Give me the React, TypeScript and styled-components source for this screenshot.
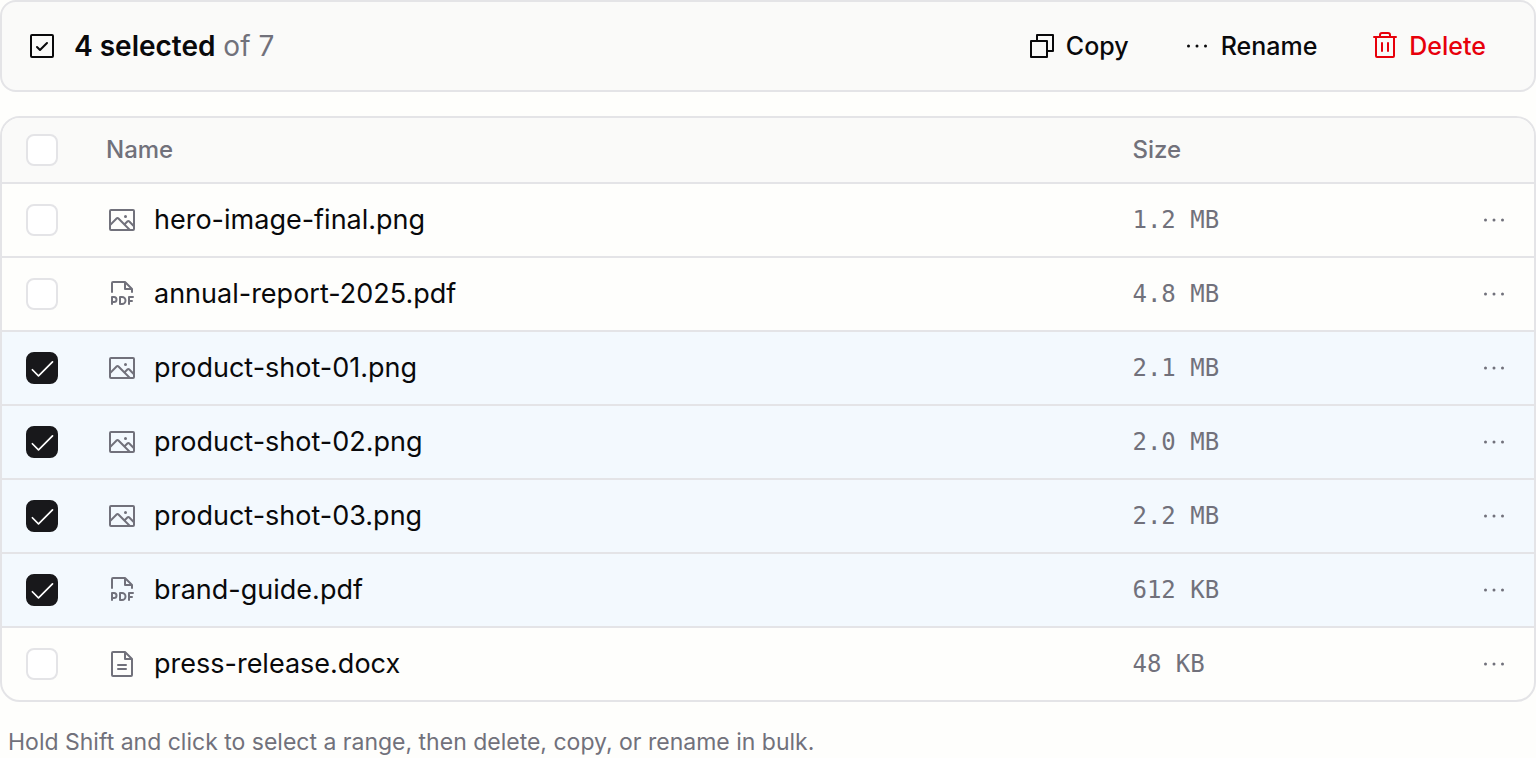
import React, { useRef, useState } from "react";
import styled, { createGlobalStyle } from "styled-components";
import {
  PiCheck,
  PiCheckSquare,
  PiCopy,
  PiDotsThree,
  PiFilePdf,
  PiFileText,
  PiImage,
  PiTrash,
} from "react-icons/pi";

const sans = `Inter, "Liberation Sans", sans-serif`;
const mono = `"DejaVu Sans Mono", "Liberation Mono", monospace`;

const color = {
  page: "#fefefc",
  panel: "#fafaf9",
  border: "#e4e4e7",
  text: "#09090b",
  muted: "#71717b",
  danger: "#e7000b",
  selected: "#f3f9fe",
  checked: "#18181b",
};

const GlobalStyle = createGlobalStyle`
  *, *::before, *::after { box-sizing: border-box; }
  body {
    margin: 0;
    background: ${color.page};
    color: ${color.text};
    font-family: ${sans};
  }
  button { font: inherit; }
`;

const Page = styled.main`
  display: flex;
  flex-direction: column;
  gap: 24px;
`;

const Toolbar = styled.div`
  display: flex;
  align-items: center;
  justify-content: space-between;
  min-height: 92px;
  padding: 0 24px;
  border: 2px solid ${color.border};
  border-radius: 16px;
  background: ${color.panel};
`;

const Summary = styled.div`
  display: flex;
  align-items: center;
  gap: 16px;
  font-size: 28px;
  line-height: 42px;
`;

const Count = styled.strong`
  font-weight: 600;
`;

const Total = styled.span`
  color: ${color.muted};
`;

const Actions = styled.div`
  display: flex;
  gap: 4px;
`;

const ActionButton = styled.button<{ $danger?: boolean }>`
  display: flex;
  align-items: center;
  gap: 8px;
  height: 56px;
  padding: 0 24px;
  border: 0;
  border-radius: 12px;
  background: transparent;
  color: ${(p) => (p.$danger ? color.danger : color.text)};
  font-size: 25px;
  font-weight: 500;
  line-height: 32px;
  cursor: pointer;
`;

const TableFrame = styled.div`
  overflow: hidden;
  border: 2px solid ${color.border};
  border-radius: 20px;
`;

const Table = styled.table`
  width: 100%;
  table-layout: fixed;
  border-collapse: separate;
  border-spacing: 0;
`;

const HeadCell = styled.th<{ $width?: string }>`
  width: ${(p) => p.$width ?? "auto"};
  height: 66px;
  padding: 0 24px;
  border-bottom: 2px solid ${color.border};
  background: ${color.panel};
  color: ${color.muted};
  font-size: 24px;
  font-weight: 500;
  line-height: 32px;
  text-align: left;
`;

const Cell = styled.td`
  height: 74px;
  padding: 0 24px;
  border-bottom: 2px solid ${color.border};
`;

const Row = styled.tr<{ $selected: boolean }>`
  background: ${(p) => (p.$selected ? color.selected : "transparent")};

  &:last-child ${Cell} {
    height: 72px;
    border-bottom: 0;
  }
`;

const FileName = styled.div`
  display: flex;
  align-items: center;
  gap: 16px;
  font-size: 27px;
  line-height: 42px;

  svg {
    flex: none;
    color: ${color.muted};
  }
`;

const SizeCell = styled(Cell)`
  color: ${color.muted};
  font-family: ${mono};
  font-size: 24px;
  line-height: 32px;
`;

const MoreButton = styled.button`
  display: block;
  width: 32px;
  height: 32px;
  padding: 0;
  border: 0;
  background: transparent;
  color: ${color.muted};
  cursor: pointer;

  svg {
    display: block;
  }
`;

const CheckLabel = styled.label`
  display: grid;
  place-items: center;
  width: 32px;
  height: 32px;

  > * {
    grid-area: 1 / 1;
  }

  svg {
    color: #ffffff;
    pointer-events: none;
  }
`;

const CheckInput = styled.input`
  appearance: none;
  width: 32px;
  height: 32px;
  margin: 0;
  border: 2px solid ${color.border};
  border-radius: 8px;
  background: #ffffff;

  &:checked {
    border-color: ${color.checked};
    background: ${color.checked};
  }
`;

const Hint = styled.p`
  margin: 0;
  padding: 0 8px;
  color: ${color.muted};
  font-size: 23px;
  line-height: 32px;
`;

type Kind = "image" | "pdf" | "doc";

const icons = { image: PiImage, pdf: PiFilePdf, doc: PiFileText };

const files: { name: string; size: string; kind: Kind }[] = [
  { name: "hero-image-final.png", size: "1.2 MB", kind: "image" },
  { name: "annual-report-2025.pdf", size: "4.8 MB", kind: "pdf" },
  { name: "product-shot-01.png", size: "2.1 MB", kind: "image" },
  { name: "product-shot-02.png", size: "2.0 MB", kind: "image" },
  { name: "product-shot-03.png", size: "2.2 MB", kind: "image" },
  { name: "brand-guide.pdf", size: "612 KB", kind: "pdf" },
  { name: "press-release.docx", size: "48 KB", kind: "doc" },
];

interface CheckboxProps {
  label: string;
  checked: boolean;
  onToggle: (shift: boolean) => void;
}

function Checkbox({ label, checked, onToggle }: CheckboxProps) {
  return (
    <CheckLabel>
      <CheckInput
        type="checkbox"
        aria-label={label}
        checked={checked}
        onChange={(e) => onToggle((e.nativeEvent as MouseEvent).shiftKey)}
      />
      {checked && <PiCheck size={28} aria-hidden />}
    </CheckLabel>
  );
}

export default function App() {
  const [selected, setSelected] = useState<Set<number>>(new Set([2, 3, 4, 5]));
  const anchor = useRef(5);

  const toggle = (index: number, shift: boolean) => {
    const next = new Set(selected);
    const on = !selected.has(index);
    const from = shift ? Math.min(anchor.current, index) : index;
    const to = shift ? Math.max(anchor.current, index) : index;
    for (let i = from; i <= to; i++) {
      if (on) next.add(i);
      else next.delete(i);
    }
    anchor.current = index;
    setSelected(next);
  };

  const all = selected.size === files.length;

  return (
    <>
      <GlobalStyle />
      <Page>
        <Toolbar>
          <Summary>
            <PiCheckSquare size={32} aria-hidden />
            <span>
              <Count>{selected.size} selected</Count> <Total>of {files.length}</Total>
            </span>
          </Summary>
          <Actions>
            <ActionButton type="button">
              <PiCopy size={32} aria-hidden />
              Copy
            </ActionButton>
            <ActionButton type="button">
              <PiDotsThree size={32} aria-hidden />
              Rename
            </ActionButton>
            <ActionButton type="button" $danger>
              <PiTrash size={32} aria-hidden />
              Delete
            </ActionButton>
          </Actions>
        </Toolbar>
        <TableFrame>
          <Table>
            <thead>
              <tr>
                <HeadCell $width="80px">
                  <Checkbox
                    label="Select all files"
                    checked={all}
                    onToggle={() => setSelected(new Set(all ? [] : files.map((_, i) => i)))}
                  />
                </HeadCell>
                <HeadCell $width="67%">Name</HeadCell>
                <HeadCell>Size</HeadCell>
                <HeadCell $width="80px" aria-label="Actions" />
              </tr>
            </thead>
            <tbody>
              {files.map((file, i) => {
                const Icon = icons[file.kind];
                return (
                  <Row key={file.name} $selected={selected.has(i)}>
                    <Cell>
                      <Checkbox
                        label={`Select ${file.name}`}
                        checked={selected.has(i)}
                        onToggle={(shift) => toggle(i, shift)}
                      />
                    </Cell>
                    <Cell>
                      <FileName>
                        <Icon size={32} aria-hidden />
                        {file.name}
                      </FileName>
                    </Cell>
                    <SizeCell>{file.size}</SizeCell>
                    <Cell>
                      <MoreButton type="button" aria-label={`More actions for ${file.name}`}>
                        <PiDotsThree size={32} aria-hidden />
                      </MoreButton>
                    </Cell>
                  </Row>
                );
              })}
            </tbody>
          </Table>
        </TableFrame>
        <Hint>Hold Shift and click to select a range, then delete, copy, or rename in bulk.</Hint>
      </Page>
    </>
  );
}
